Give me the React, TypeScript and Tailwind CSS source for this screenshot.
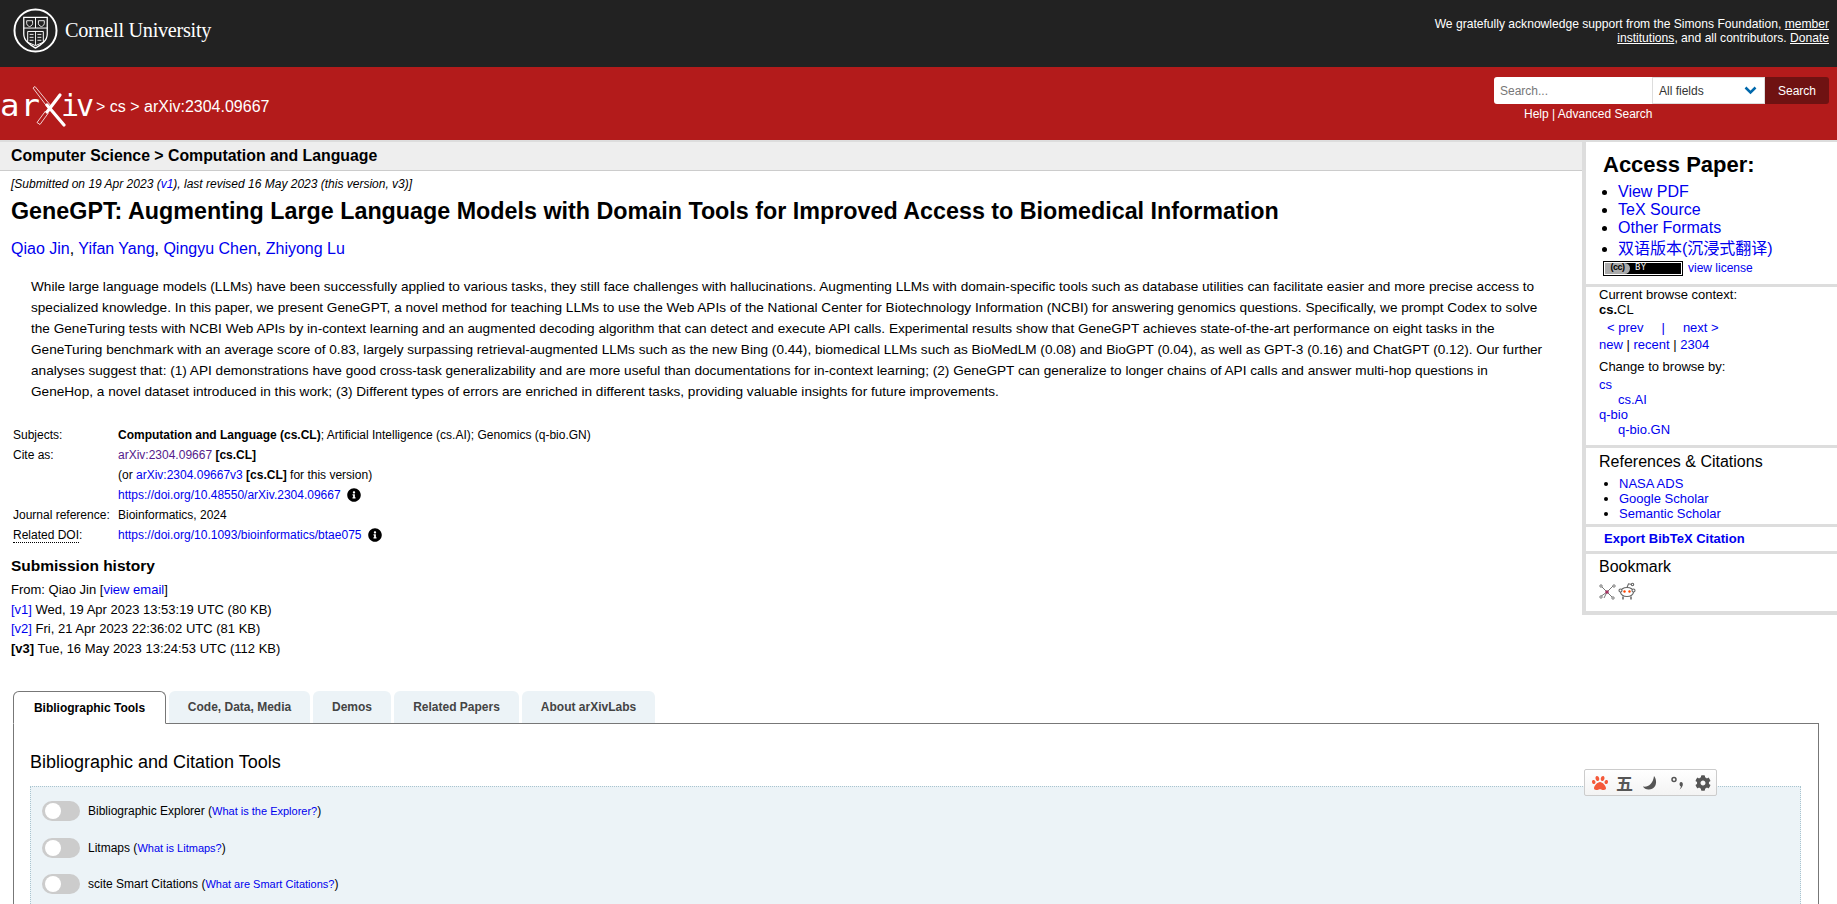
import { FaCog, FaInfoCircle, FaPaw } from "react-icons/fa";

const Info = () => <FaInfoCircle size={14} className="inline-block text-black" />;

const A = ({ children, className = "" }: { children: React.ReactNode; className?: string }) => (
  <a href="#" className={`text-[#0000ee] ${className}`}>{children}</a>
);

const CornellSeal = () => (
  <svg width="45" height="45" viewBox="0 0 46 46" fill="none" stroke="#fff">
    <circle cx="23" cy="23" r="21.5" strokeWidth="2" />
    <path d="M11 9.500h24v17c0 7-6 11-12 14.500c-6-3.500-12-7.500-12-14.500z" strokeWidth="1.300" />
    <path d="M11 20.500h24M23 9.500v11" strokeWidth="1" />
    <path d="M14 13h6v3c0 2-3 3-3 3s-3-1-3-3zM26 13h6v3c0 2-3 3-3 3s-3-1-3-3z" strokeWidth="0.9" />
    <path d="M15 24h16v11l-8 3.500l-8-3.500z" strokeWidth="1" />
    <path d="M23 24v14M17 27h4M17 30h4M17 33h4M25 27h4M25 30h4M25 33h4" strokeWidth="0.9" />
  </svg>
);

const ArxivLogo = () => (
  <div className="flex items-center text-white h-[42px] w-[96px] [font-family:'DejaVu_Sans_Mono',monospace] text-[30px] leading-none">
    <span className="w-[30px] tracking-[1px] -mt-[3px] scale-x-[1.08] origin-left shrink-0">ar</span>
    <svg width="34" height="42" viewBox="0 0 34 42" className="shrink-0 ml-[2px]" fill="none">
      <path d="M3 0.500L19 20L16.500 22.500L1 2z" stroke="#fff" strokeWidth="0.8" />
      <path d="M15 19l17 20" stroke="#fff" strokeWidth="3.200" strokeLinecap="round" />
      <path d="M28 9L15 26" stroke="#fff" strokeWidth="3.200" strokeLinecap="round" />
      <path d="M13.500 25L16 27.500L8 38.500L5 36.500z" stroke="#fff" strokeWidth="0.8" />
    </svg>
    <span className="tracking-[-3px] -ml-[5px] -mt-[3px]">iv</span>
  </div>
);

const CcBadge = () => (
  <div className="w-[80px] h-[15px] border border-black bg-white p-px">
    <div className="h-full bg-black flex items-center overflow-hidden">
      <div className="w-[25px] h-full bg-[#aaa] rounded-r-full flex items-center justify-center text-[9px] font-bold text-black tracking-[-0.5px]">(cc)</div>
      <span className="ml-[5px] text-white text-[8px] tracking-[1px] [font-family:'DejaVu_Sans',sans-serif]">BY</span>
    </div>
  </div>
);

const BibIcon = () => (
  <svg width="17" height="16" viewBox="0 0 17 16" fill="none" stroke="#777" strokeWidth="1">
    <path d="M2 2l6 6M15 1l-7 7M1 13l7-5M8 8l6 6M8 8l-3 6" />
    <circle cx="2" cy="2" r="1.200" fill="#fff" />
    <circle cx="15" cy="2" r="1.200" fill="#fff" />
    <circle cx="2" cy="13" r="1.200" fill="#fff" />
    <circle cx="14" cy="14" r="1.200" fill="#fff" />
    <circle cx="8" cy="8" r="1.800" fill="#a23060" stroke="none" />
  </svg>
);

const RedditIcon = () => (
  <svg width="18" height="18" viewBox="0 0 18 18" fill="none" stroke="#666" strokeWidth="1.100">
    <ellipse cx="9" cy="10" rx="6.500" ry="4.500" fill="#fff" />
    <circle cx="2.500" cy="8.500" r="1.500" fill="#fff" />
    <circle cx="15.500" cy="8.500" r="1.500" fill="#fff" />
    <path d="M9 5.500L10.500 1.800L14 2.500" />
    <circle cx="14.500" cy="2.500" r="1.200" fill="#fff" />
    <circle cx="6.500" cy="9.500" r="1.200" fill="#ff4500" stroke="none" />
    <circle cx="11.500" cy="9.500" r="1.200" fill="#ff4500" stroke="none" />
    <path d="M5 14.500v3M13 14.500v3" strokeWidth="1.500" />
  </svg>
);

const Toggle = () => (
  <div className="w-[38px] h-[20px] rounded-full bg-[#ccc] flex items-center pl-[3px] shrink-0">
    <div className="w-[16px] h-[16px] rounded-full bg-white" />
  </div>
);

const ToolRow = ({ label, link }: { label: string; link: string }) => (
  <div className="flex items-center h-[36.500px] gap-[8px]">
    <Toggle />
    <span className="text-[12px] text-black">
      {label} (<A className="text-[11px]">{link}</A>)
    </span>
  </div>
);

const tabs = [
  { name: "Code, Data, Media", w: "w-[141px]" },
  { name: "Demos", w: "w-[78px]" },
  { name: "Related Papers", w: "w-[125px]" },
  { name: "About arXivLabs", w: "w-[133px]" },
];

export default function App() {
  return (
    <div className="h-[904px] relative overflow-hidden bg-white text-black [font-family:'Liberation_Sans',Arial,sans-serif]">
      {/* cornell bar */}
      <div className="h-[67px] bg-[#222] flex justify-between pl-[13px] pr-[8px]">
        <div className="flex items-center gap-[7px] h-[61px]">
          <CornellSeal />
          <span className="text-white text-[20.300px] tracking-[-0.3px] [font-family:'Liberation_Serif',serif]">Cornell University</span>
        </div>
        <p className="w-[420px] text-right text-white text-[12.100px] leading-[14px] pt-[17px]">
          We gratefully acknowledge support from the Simons Foundation, <a href="#" className="underline">member</a>
          <br />
          <a href="#" className="underline">institutions</a>, and all contributors. <a href="#" className="underline">Donate</a>
        </p>
      </div>

      {/* red bar */}
      <div className="h-[73px] bg-[#b31b1b] flex justify-between items-start pr-[8px]">
        <div className="flex items-center h-[42px] mt-[19px]">
          <ArxivLogo />
          <span className="text-white text-[16px]">&gt; cs &gt; arXiv:2304.09667</span>
        </div>
        <div className="flex flex-col items-stretch pt-[10px]">
          <div className="flex h-[27px]">
            <div className="w-[158px] bg-white rounded-l-[3px] text-[#777] text-[12px] pl-[6px] flex items-center">Search...</div>
            <div className="w-[113px] bg-white border border-[#ddd] text-[12px] text-[#333] pl-[6px] flex items-center justify-between pr-[7px]">
              All fields
              <svg width="13" height="9" viewBox="0 0 13 9" fill="none" stroke="#0068ac" strokeWidth="2.500"><path d="M1.500 1.500l5 5l5-5" /></svg>
            </div>
            <div className="w-[64px] bg-[#6f1212] rounded-r-[3px] text-white text-[12px] flex items-center justify-center">Search</div>
          </div>
          <div className="text-white text-[12px] leading-[14px] pt-[3px] pl-[30px]">Help | Advanced Search</div>
        </div>
      </div>

      <div className="flex items-start border-t-2 border-[#ddd]">
        {/* main column */}
        <div className="w-[1582px] shrink-0">
          <div className="h-[29px] bg-[#eee] border-b border-[#ccc] pl-[11px] flex items-center">
            <span className="text-[15.840px] font-bold">Computer Science &gt; Computation and Language</span>
          </div>
          <div className="pl-[11px] pt-[6px] text-[12px] leading-[14px] italic">[Submitted on 19 Apr 2023 (<A>v1</A>), last revised 16 May 2023 (this version, v3)]</div>
          <h1 className="pl-[11px] mt-[6px] text-[23.300px] leading-[28px] font-bold">GeneGPT: Augmenting Large Language Models with Domain Tools for Improved Access to Biomedical Information</h1>
          <div className="pl-[11px] mt-[15px] text-[16px] leading-[18px]">
            <A>Qiao Jin</A>, <A>Yifan Yang</A>, <A>Qingyu Chen</A>, <A>Zhiyong Lu</A>
          </div>
          <p className="pl-[31px] mt-[18px] text-[13.620px] leading-[21px] whitespace-nowrap">
            While large language models (LLMs) have been successfully applied to various tasks, they still face challenges with hallucinations. Augmenting LLMs with domain-specific tools such as database utilities can facilitate easier and more precise access to<br />
            specialized knowledge. In this paper, we present GeneGPT, a novel method for teaching LLMs to use the Web APIs of the National Center for Biotechnology Information (NCBI) for answering genomics questions. Specifically, we prompt Codex to solve<br />
            the GeneTuring tests with NCBI Web APIs by in-context learning and an augmented decoding algorithm that can detect and execute API calls. Experimental results show that GeneGPT achieves state-of-the-art performance on eight tasks in the<br />
            GeneTuring benchmark with an average score of 0.83, largely surpassing retrieval-augmented LLMs such as the new Bing (0.44), biomedical LLMs such as BioMedLM (0.08) and BioGPT (0.04), as well as GPT-3 (0.16) and ChatGPT (0.12). Our further<br />
            analyses suggest that: (1) API demonstrations have good cross-task generalizability and are more useful than documentations for in-context learning; (2) GeneGPT can generalize to longer chains of API calls and answer multi-hop questions in<br />
            GeneHop, a novel dataset introduced in this work; (3) Different types of errors are enriched in different tasks, providing valuable insights for future improvements.
          </p>

          <div className="pl-[13px] mt-[23px] grid grid-cols-[105px_1fr] auto-rows-[20px] items-center text-[12px] leading-[20px]">
            <span>Subjects:</span>
            <span><b>Computation and Language (cs.CL)</b>; Artificial Intelligence (cs.AI); Genomics (q-bio.GN)</span>
            <span>Cite as:</span>
            <span><a href="#" className="text-[#551a8b]">arXiv:2304.09667</a> <b>[cs.CL]</b></span>
            <span />
            <span>(or <A>arXiv:2304.09667v3</A> <b>[cs.CL]</b> for this version)</span>
            <span />
            <span className="flex items-center gap-[6px]"><A>https://doi.org/10.48550/arXiv.2304.09667</A><Info /></span>
            <span>Journal reference:</span>
            <span>Bioinformatics, 2024</span>
            <span><span className="leading-[14px] inline-block border-b border-dotted border-black">Related DOI</span>:</span>
            <span className="flex items-center gap-[6px]"><A>https://doi.org/10.1093/bioinformatics/btae075</A><Info /></span>
          </div>

          <h2 className="pl-[11px] mt-[11px] text-[15.500px] leading-[20px] font-bold">Submission history</h2>
          <div className="pl-[11px] mt-[4px] text-[13px] leading-[19.500px]">
            <div>From: Qiao Jin [<A>view email</A>]</div>
            <div><A>[v1]</A> Wed, 19 Apr 2023 13:53:19 UTC (80 KB)</div>
            <div><A>[v2]</A> Fri, 21 Apr 2023 22:36:02 UTC (81 KB)</div>
            <div><b>[v3]</b> Tue, 16 May 2023 13:24:53 UTC (112 KB)</div>
          </div>
        </div>

        {/* sidebar */}
        <aside className="flex-1 border-l-[4px] border-b-[4px] border-[#ddd] h-[473px] flex flex-col bg-white">
          <div className="h-[145px] shrink-0 pl-[17px] pt-[10px] border-b-[3px] border-[#ddd]">
            <h2 className="text-[22px] leading-[26px] font-bold">Access Paper:</h2>
            <ul className="list-disc pl-[15px] mt-[5px] text-[16px] leading-[18px] marker:text-black">
              <li><A>View PDF</A></li>
              <li><A>TeX Source</A></li>
              <li><A>Other Formats</A></li>
              <li className="mt-[3px] [font-family:'Liberation_Sans','Noto_Sans_CJK_SC',sans-serif]"><A>双语版本(沉浸式翻译)</A></li>
            </ul>
            <div className="flex items-center gap-[5px] mt-[1px]">
              <CcBadge />
              <A className="text-[12px]">view license</A>
            </div>
          </div>

          <div className="h-[161px] shrink-0 border-b-[3px] border-[#ddd] pl-[13px] text-[13px] leading-[15px]">
            <div>Current browse context:</div>
            <div className="font-bold">cs.<span className="font-normal">CL</span></div>
            <div className="mt-[2.500px] pl-[8px] flex"><A>&lt; prev</A><A className="ml-[18px]">|</A><A className="ml-[18px]">next &gt;</A></div>
            <div className="mt-[2.500px]"><A>new</A> | <A>recent</A> | <A>2304</A></div>
            <div className="mt-[6.500px]">Change to browse by:</div>
            <div className="mt-[3px]"><A>cs</A></div>
            <div className="pl-[19px]"><A>cs.AI</A></div>
            <div><A>q-bio</A></div>
            <div className="pl-[19px]"><A>q-bio.GN</A></div>
          </div>

          <div className="h-[79px] shrink-0 border-b-[3px] border-[#ddd] pl-[13px] pt-[4px]">
            <h3 className="text-[16px] leading-[20px]">References &amp; Citations</h3>
            <ul className="list-disc pl-[20px] mt-[4px] text-[13px] leading-[15px]">
              <li><A>NASA ADS</A></li>
              <li><A>Google Scholar</A></li>
              <li><A>Semantic Scholar</A></li>
            </ul>
          </div>

          <div className="h-[27px] shrink-0 border-b-[3px] border-[#ddd] pl-[18px] flex items-center">
            <A className="text-[13px] font-bold">Export BibTeX Citation</A>
          </div>

          <div className="pl-[13px] pt-[3px]">
            <h3 className="text-[16px] leading-[20px]">Bookmark</h3>
            <div className="flex items-end gap-[2px] mt-[5px]"><BibIcon /><RedditIcon /></div>
          </div>
        </aside>
      </div>

      {/* labs tabs */}
      <div className="ml-[13px] mr-[18px] mt-[33px]">
        <div className="flex gap-[3px] items-end h-[33px] border-b border-[#777]">
          <div className="w-[153px] h-[33px] -mb-px bg-white border border-[#777] border-b-white rounded-t-[6px] flex items-center justify-center text-[12px] font-bold text-black">Bibliographic Tools</div>
          {tabs.map((t) => (
            <div key={t.name} className={`${t.w} h-[32px] bg-[#ecf3f7] rounded-t-[6px] flex items-center justify-center text-[12px] font-bold text-[#444]`}>{t.name}</div>
          ))}
        </div>
        <div className="border-x border-[#777] h-[300px] pl-[16px] pr-[17px]">
          <h2 className="text-[18px] leading-[22px] pt-[27px] box-content">Bibliographic and Citation Tools</h2>
          <div className="mt-[13px] bg-[#ecf3f7] border border-dotted border-[#a9c4cf] pl-[11px] pt-[6px] h-[200px]">
            <ToolRow label="Bibliographic Explorer" link="What is the Explorer?" />
            <ToolRow label="Litmaps" link="What is Litmaps?" />
            <ToolRow label="scite Smart Citations" link="What are Smart Citations?" />
          </div>
        </div>
      </div>

      {/* floating ime toolbar */}
      <div className="absolute left-[1584px] top-[769px] w-[133px] h-[27px] border border-[#ccc] rounded-[2px] bg-gradient-to-b from-white to-[#f3f3f3] flex items-center pl-[7px] text-[#555]">
        <FaPaw size={16} className="text-[#f4593a] shrink-0" />
        <span className="ml-[8px] text-[17px] font-bold leading-none [font-family:'Noto_Sans_CJK_SC',sans-serif]">五</span>
        <svg width="14" height="14" viewBox="0 0 14 14" fill="#555" className="ml-[10px] shrink-0"><path d="M11 0C14.500 4 14 13 6 13.500C3.500 13.700 1 12.500 0 10.500C5 11.500 10 8 11 0z" /></svg>
        <svg width="13" height="14" viewBox="0 0 13 14" fill="none" className="ml-[14px] shrink-0"><circle cx="3" cy="3.500" r="2" stroke="#555" strokeWidth="1.500" /><path d="M10 6c1.500 0 2.300 1.500 1.700 3.500c-.5 1.500-1.700 3-3.200 4c.8-1 1.300-2 1.300-3.300c-1.800-.5-1.500-4.200.2-4.200z" fill="#555" /></svg>
        <FaCog size={16} className="ml-[11px] shrink-0" />
      </div>
    </div>
  );
}
